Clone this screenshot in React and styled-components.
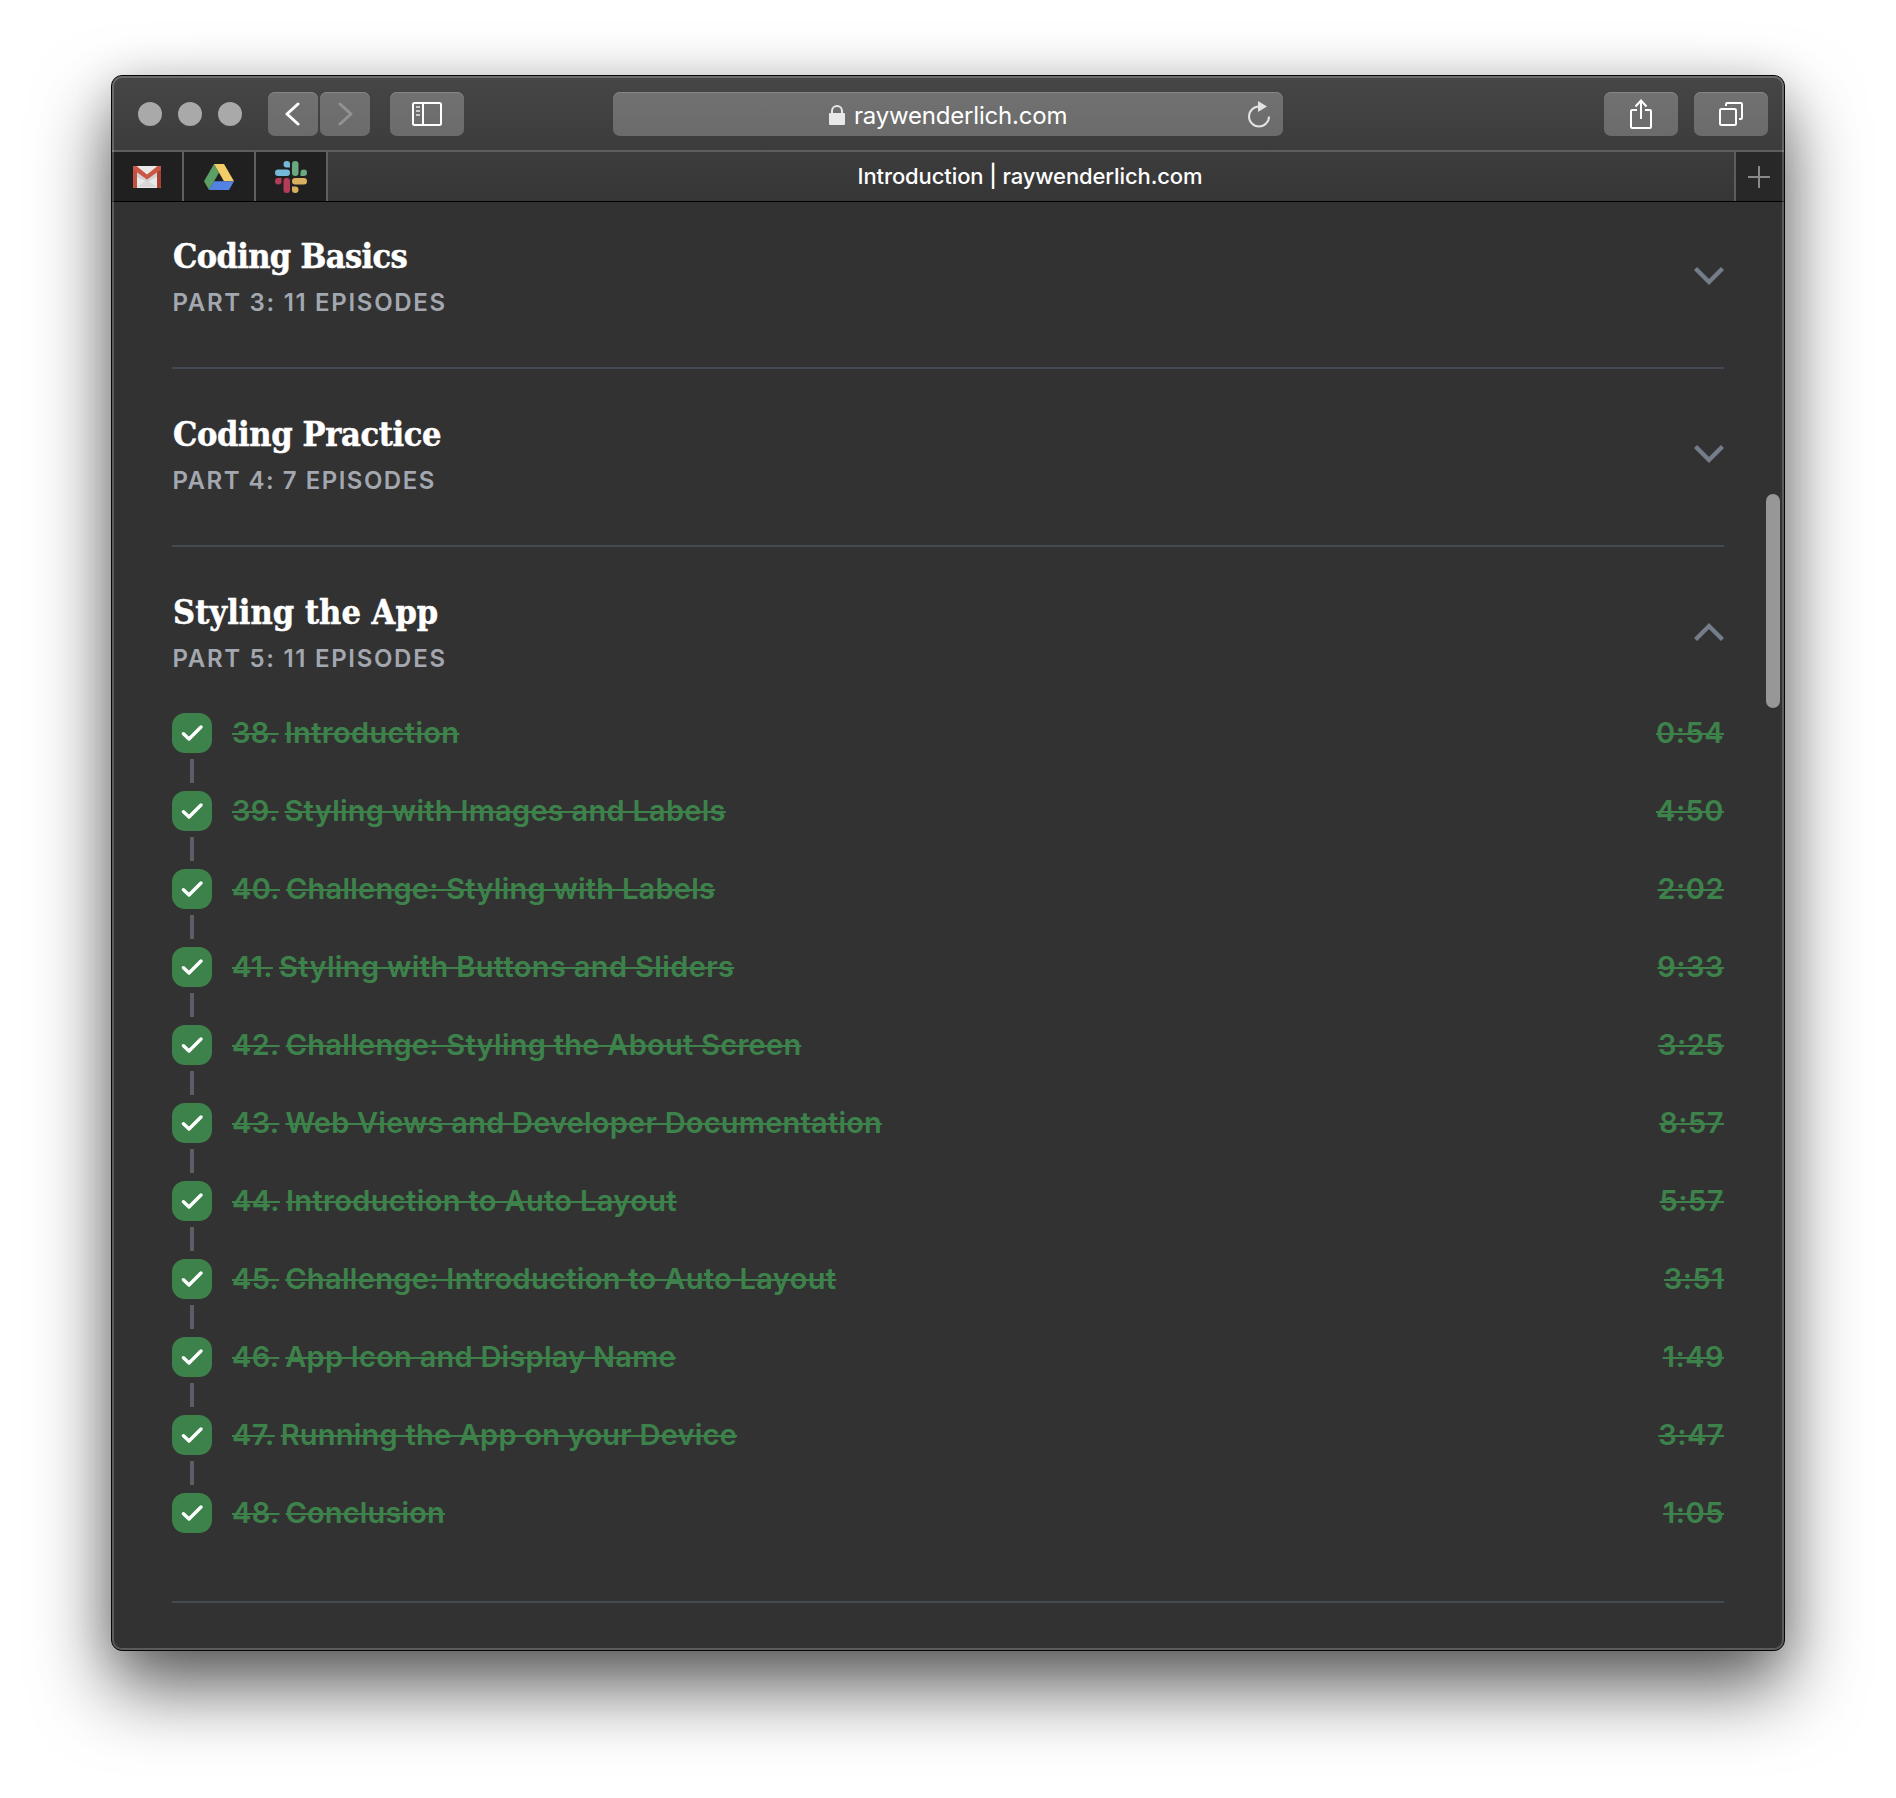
import React from "react";
import styled, { createGlobalStyle, css } from "styled-components";

const Global = createGlobalStyle`
  * { box-sizing: border-box; }
  html, body { margin: 0; background: #fff; }
  body { font-family: Inter, "Liberation Sans", sans-serif; }
`;

const Desktop = styled.main`
  width: 1896px;
  height: 1798px;
  padding: 75px 111px 147px;
  overflow: hidden;
  background: #fff;
`;

const Window = styled.div`
  position: relative;
  display: flex;
  flex-direction: column;
  width: 1674px;
  height: 1576px;
  border: 1px solid #060606;
  border-radius: 11px;
  background: #323232;
  box-shadow: 0 36px 76px rgba(0, 0, 0, 0.64), 0 4px 40px rgba(0, 0, 0, 0.12);

  &::after {
    content: "";
    position: absolute;
    inset: 0;
    border: 2px solid rgba(255, 255, 255, 0.2);
    border-radius: 10px;
    pointer-events: none;
  }
`;

const Toolbar = styled.header`
  display: grid;
  grid-template-columns: 501px 670px 1fr;
  align-items: center;
  height: 76px;
  flex: none;
  padding-top: 2px;
  border-bottom: 2px solid #5d5d5d;
  border-radius: 10px 10px 0 0;
  background: linear-gradient(#464646, #3c3c3c);
`;

const ToolGroup = styled.div`
  display: flex;
  align-items: center;
  gap: ${(p) => p.$gap || 0}px;
  padding-left: ${(p) => p.$left || 0}px;
  padding-right: ${(p) => p.$right || 0}px;
  justify-content: ${(p) => (p.$end ? "flex-end" : "flex-start")};
`;

const Light = styled.span`
  width: 24px;
  height: 24px;
  border-radius: 50%;
  background: #a9a9a9;
`;

const raised = css`
  height: 44px;
  border: 0;
  border-radius: 7px;
  background: linear-gradient(#717171, #6b6b6b);
  box-shadow: inset 0 1px 0 #858585;
`;

const ToolButton = styled.button`
  ${raised}
  display: flex;
  align-items: center;
  justify-content: center;
  width: ${(p) => p.$width}px;
  padding: 0;
`;

const AddressBar = styled.div`
  ${raised}
  display: grid;
  grid-template-columns: 232px auto 1fr;
  align-items: center;
  padding-right: 12px;
  color: #fff;
  font: 400 24px/44px Inter, sans-serif;
`;

const LockCell = styled.span`
  display: flex;
  justify-content: flex-end;
`;

const Host = styled.span`
  padding: 2px 0 0 9px;
  letter-spacing: -0.2px;
`;

const ReloadCell = styled.span`
  display: flex;
  justify-content: flex-end;
`;

const TabBar = styled.nav`
  display: flex;
  flex: none;
  height: 50px;
  border-bottom: 1px solid #000;
`;

const PinnedTab = styled.div`
  display: flex;
  align-items: center;
  justify-content: center;
  width: 72px;
  border-right: 2px solid #606060;
  background: #202020;
`;

const ActiveTab = styled.div`
  flex: 1;
  padding-right: 2px;
  border-right: 2px solid #5d5d5d;
  background: linear-gradient(#3c3c3c, #363636);
  color: #fff;
  font: 500 22px/48px Inter, sans-serif;
  letter-spacing: -0.11px;
  text-align: center;
`;

const NewTab = styled.div`
  display: flex;
  align-items: center;
  justify-content: center;
  width: 48px;
  padding-right: 2px;
  background: #282828;
`;

const Page = styled.div`
  flex: 1;
  padding: 0 60px;
`;

const Section = styled.section`
  border-bottom: 2px solid #444a54;
  padding-top: ${(p) => p.$top}px;
  height: ${(p) => p.$height}px;
`;

const SectionHead = styled.div`
  display: flex;
  align-items: flex-start;
  justify-content: space-between;
`;

const Title = styled.h2`
  margin: -1px 0 0;
  padding-left: 1px;
  color: #fff;
  font: 700 34px/44px "DejaVu Serif Condensed", "DejaVu Serif", serif;
  font-stretch: condensed;
  letter-spacing: ${(p) => p.$track}px;
  -webkit-text-stroke: 0.5px #fff;
`;

const Subtitle = styled.p`
  margin: 9px 0 0;
  padding-left: 0.5px;
  color: #a3a7af;
  font-size: 24px;
  font-weight: 600;
  line-height: 32px;
  letter-spacing: ${(p) => p.$track}px;
`;

const ChevronSlot = styled.span`
  display: flex;
  padding-top: 31px;
`;

const Episodes = styled.ul`
  margin: 0;
  padding: 38px 0 0;
  list-style: none;
`;

const Episode = styled.li`
  display: grid;
  grid-template-columns: 40px 1fr auto;
  column-gap: 20px;
  height: 78px;
  color: #3d824b;
  font-size: 29px;
  font-weight: 600;
  line-height: 40px;
`;

const Rail = styled.div`
  display: flex;
  flex-direction: column;
  align-items: center;
  gap: 6px;
`;

const CheckBox = styled.span`
  display: flex;
  align-items: center;
  justify-content: center;
  width: 40px;
  height: 40px;
  border-radius: 13px;
  background: #3d824b;
`;

const Connector = styled.span`
  width: 4px;
  height: 24px;
  background: #5b5e67;
`;

const Name = styled.div`
  display: flex;
  gap: 6px;
`;

const Struck = styled.s`
  letter-spacing: ${(p) => p.$track || 0}px;
  text-decoration-thickness: 2px;
`;

const ScrollThumb = styled.div`
  position: absolute;
  top: 418px;
  right: 4px;
  width: 14px;
  height: 214px;
  border-radius: 7px;
  background: #979797;
`;

const Arrow = ({ forward }) => (
  <svg width="16" height="26" viewBox="0 0 16 26" fill="none" stroke={forward ? "#929292" : "#fff"} strokeWidth="3" strokeLinecap="round" strokeLinejoin="round">
    <path d={forward ? "M3 3 14 13 3 23" : "M13 3 2 13 13 23"} />
  </svg>
);

const SidebarIcon = () => (
  <svg width="30" height="24" viewBox="0 0 30 24" fill="none" stroke="#fff" strokeWidth="2">
    <rect x="1" y="1" width="28" height="22" rx="1.5" />
    <path d="M11 1v22" />
    <path d="M4 5h4M4 9h4M4 13h4" stroke="#c8c8c8" />
  </svg>
);

const LockIcon = () => (
  <svg width="16" height="20" viewBox="0 0 16 20">
    <rect y="8" width="16" height="12" rx="1" fill="#e8e8e8" />
    <path d="M3 9V6a5 5 0 0 1 10 0v3" fill="none" stroke="#e8e8e8" strokeWidth="2" />
  </svg>
);

const ReloadIcon = () => (
  <svg width="24" height="28" viewBox="0 0 24 28">
    <path d="M12 5.5A10 10 0 1 0 22 15.5" fill="none" stroke="#e2e2e2" strokeWidth="2" />
    <path d="M11 0 20 5.500 11 11z" fill="#e2e2e2" />
  </svg>
);

const ShareIcon = () => (
  <svg width="22" height="30" viewBox="0 0 22 30" fill="none" stroke="#fff" strokeWidth="2">
    <path d="M7 11H2.200Q1 11 1 12.200V27.800Q1 29 2.200 29H19.800Q21 29 21 27.800V12.200Q21 11 19.800 11H15" />
    <path d="M11 20V1.500M5.500 7.500 11 1.500 16.500 7.500" />
  </svg>
);

const OverviewIcon = () => (
  <svg width="24" height="24" viewBox="0 0 24 24" fill="none" stroke="#fff" strokeWidth="2">
    <rect x="1" y="7" width="16" height="16" rx="1.500" />
    <path d="M7 4V2.200Q7 1 8.200 1H21.800Q23 1 23 2.200V15.800Q23 17 21.800 17H20" />
  </svg>
);

const PlusIcon = () => (
  <svg width="22" height="22" viewBox="0 0 22 22" stroke="#8a8a8a" strokeWidth="2">
    <path d="M11 0v22M0 11h22" />
  </svg>
);

const Chevron = ({ up }) => (
  <svg width="30" height="20" viewBox="0 0 30 20" fill="none" stroke="#757d8b" strokeWidth="4.400">
    <path d={up ? "M1.500 17.500 15 4 28.500 17.500" : "M1.500 2.500 15 16 28.500 2.500"} />
  </svg>
);

const CheckIcon = () => (
  <svg width="22" height="18" viewBox="0 0 22 18" fill="none" stroke="#fff" strokeWidth="3.400" strokeLinecap="round" strokeLinejoin="round">
    <path d="M2.500 9.700 8 15 20 3" />
  </svg>
);

const MailIcon = () => (
  <svg width="28" height="22" viewBox="0 0 28 22">
    <rect width="28" height="22" rx="1.500" fill="#e9e9e9" />
    <path d="M4 21 14 14 24 21z" fill="#d8d8d8" />
    <path d="M4 5v6l10 5 10-5V5L14 13z" fill="#d2d2d2" />
    <path d="M0 1.500 2 0 4 3V22H1.500Q0 22 0 20.500z" fill="#c3503f" />
    <path d="M28 1.500 26 0 24 3V22h2.500Q28 22 28 20.500z" fill="#a94033" />
    <path d="M0 2Q0 0 2 0h1.500L14 8.500 24.500 0H26q2 0 2 2v1.500L14 13.500 0 3.500z" fill="#cb5645" />
  </svg>
);

const DriveIcon = () => (
  <svg width="30" height="26" viewBox="0 0 30 26">
    <path d="M10 0 15 8.700 5 26 0 17.300z" fill="#5b9f65" />
    <path d="M10 0h10l10 17.300H20z" fill="#f3cd68" />
    <path d="M10 17.300h20L25 26H5z" fill="#5382e3" />
  </svg>
);

const SlackIcon = () => (
  <svg width="32" height="32" viewBox="0 0 32 32">
    <g fill="#75b9d8">
      <path d="M15 6.500H11.800A3.250 3.250 0 1 1 15 3.250z" />
      <rect x="0" y="8.500" width="15" height="6.500" rx="3.250" />
    </g>
    <g fill="#68a980">
      <rect x="17" y="0" width="6.500" height="15" rx="3.250" />
      <path d="M25.500 15V11.750A3.250 3.250 0 1 1 28.750 15z" />
    </g>
    <g fill="#b33d58">
      <path d="M6.500 17V20.250A3.250 3.250 0 1 1 3.250 17z" />
      <rect x="8.500" y="17" width="6.500" height="15" rx="3.250" />
    </g>
    <g fill="#d9b060">
      <rect x="17" y="17" width="15" height="6.500" rx="3.250" />
      <path d="M17 25.500H20.250A3.250 3.250 0 1 1 17 28.750z" />
    </g>
  </svg>
);

const episodes = [
  { no: "38.", name: "Introduction", time: "0:54", track: 0.35 },
  { no: "39.", name: "Styling with Images and Labels", time: "4:50", track: 0.26 },
  { no: "40.", name: "Challenge: Styling with Labels", time: "2:02", track: 0.24 },
  { no: "41.", name: "Styling with Buttons and Sliders", time: "9:33", track: 0.36 },
  { no: "42.", name: "Challenge: Styling the About Screen", time: "3:25", track: 0.27 },
  { no: "43.", name: "Web Views and Developer Documentation", time: "8:57", track: 0.22 },
  { no: "44.", name: "Introduction to Auto Layout", time: "5:57", track: 0.36 },
  { no: "45.", name: "Challenge: Introduction to Auto Layout", time: "3:51", track: 0.32 },
  { no: "46.", name: "App Icon and Display Name", time: "1:49", track: 0.24 },
  { no: "47.", name: "Running the App on your Device", time: "3:47", track: 0.22 },
  { no: "48.", name: "Conclusion", time: "1:05", track: 0.14 },
];

const Part = ({ title, subtitle, track, subTrack, top, height, open, children }) => (
  <Section $top={top} $height={height}>
    <SectionHead>
      <div>
        <Title $track={track}>{title}</Title>
        <Subtitle $track={subTrack}>{subtitle}</Subtitle>
      </div>
      <ChevronSlot>
        <Chevron up={open} />
      </ChevronSlot>
    </SectionHead>
    {children}
  </Section>
);

export default function App() {
  return (
    <Desktop>
      <Global />
      <Window>
        <Toolbar>
          <ToolGroup $gap={26} $left={26}>
            <ToolGroup $gap={16}>
              <Light />
              <Light />
              <Light />
            </ToolGroup>
            <ToolGroup $gap={20}>
              <ToolGroup $gap={2}>
                <ToolButton $width={50} aria-label="Back"><Arrow /></ToolButton>
                <ToolButton $width={50} aria-label="Forward"><Arrow forward /></ToolButton>
              </ToolGroup>
              <ToolButton $width={74} aria-label="Sidebar"><SidebarIcon /></ToolButton>
            </ToolGroup>
          </ToolGroup>
          <AddressBar>
            <LockCell><LockIcon /></LockCell>
            <Host>raywenderlich.com</Host>
            <ReloadCell><ReloadIcon /></ReloadCell>
          </AddressBar>
          <ToolGroup $gap={16} $right={16} $end>
            <ToolButton $width={74} aria-label="Share"><ShareIcon /></ToolButton>
            <ToolButton $width={74} aria-label="Tab overview"><OverviewIcon /></ToolButton>
          </ToolGroup>
        </Toolbar>
        <TabBar>
          <PinnedTab><MailIcon /></PinnedTab>
          <PinnedTab><DriveIcon /></PinnedTab>
          <PinnedTab><SlackIcon /></PinnedTab>
          <ActiveTab>Introduction | raywenderlich.com</ActiveTab>
          <NewTab><PlusIcon /></NewTab>
        </TabBar>
        <Page>
          <Part title="Coding Basics" subtitle="PART 3: 11 EPISODES" track={-0.63} subTrack={1.7} top={33} height={167} />
          <Part title="Coding Practice" subtitle="PART 4: 7 EPISODES" track={-0.35} subTrack={1.5} top={44} height={178} />
          <Part title="Styling the App" subtitle="PART 5: 11 EPISODES" track={0.05} subTrack={1.7} top={44} height={1056} open>
            <Episodes>
              {episodes.map((e, i) => (
                <Episode key={e.no}>
                  <Rail>
                    <CheckBox><CheckIcon /></CheckBox>
                    {i < episodes.length - 1 && <Connector />}
                  </Rail>
                  <Name>
                    <Struck $track={0.35}>{e.no}</Struck>
                    <Struck $track={e.track}>{e.name}</Struck>
                  </Name>
                  <Struck $track={0.5}>{e.time}</Struck>
                </Episode>
              ))}
            </Episodes>
          </Part>
        </Page>
        <ScrollThumb />
      </Window>
    </Desktop>
  );
}
